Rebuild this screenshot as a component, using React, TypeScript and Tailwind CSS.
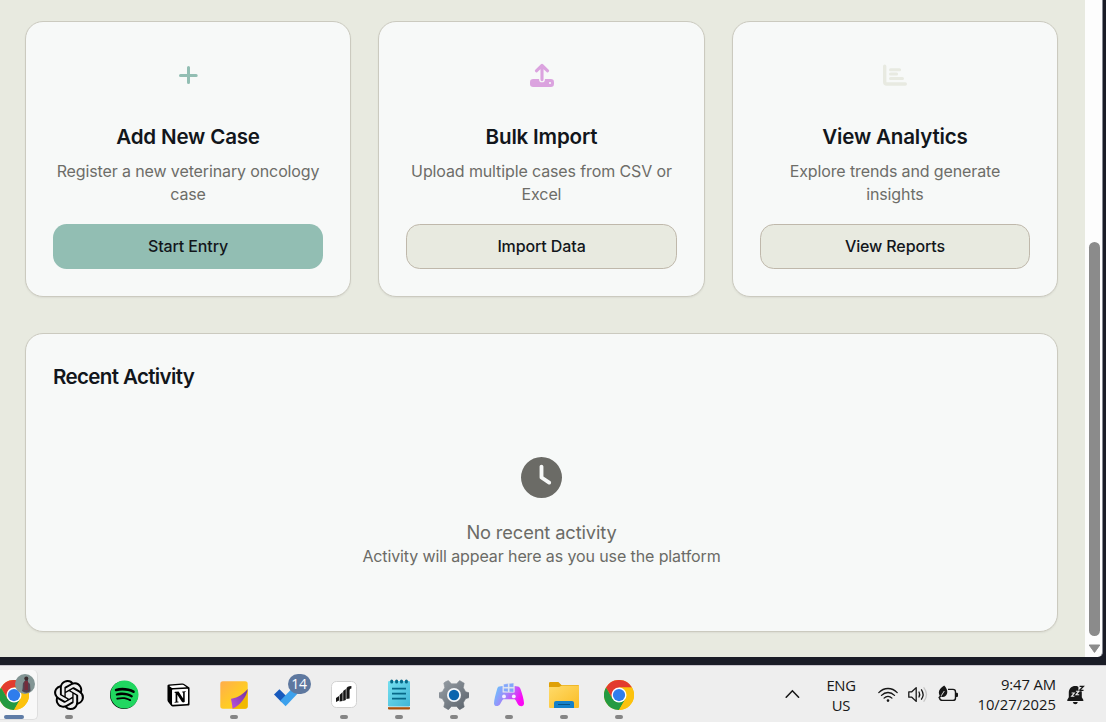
import type { ReactNode } from "react";
import { FaClock, FaSpotify } from "react-icons/fa6";
import { SiOpenai, SiNotion } from "react-icons/si";

function PlusIcon() {
  return (
    <svg className="mr-[1px]" width="20" height="20" viewBox="0 0 20 20" fill="none" stroke="#92beb3" strokeWidth="3" strokeLinecap="round">
      <path d="M10.5 2.5V17.5M2.500 10.5H18.2" />
    </svg>
  );
}

function UploadIcon() {
  return (
    <svg width="24" height="24" viewBox="0 0 24 24">
      <rect x="0" y="16" width="24" height="8" rx="3.2" fill="#dba3df" />
      <path d="M9.1 14.9V16.400a2.900 2.900 0 0 0 5.800 0v-1.500z" fill="#f7f9f8" />
      <circle cx="20" cy="20" r="1.1" fill="#f7f9f8" />
      <path d="M12 16.600V2.800M6.400 7.800 12 2.500l5.600 5.300" fill="none" stroke="#dba3df" strokeWidth="3.100" strokeLinecap="round" strokeLinejoin="round" />
    </svg>
  );
}

function BarsIcon() {
  return (
    <svg width="24" height="22" viewBox="0 0 24 22" fill="none" stroke="#e8eae1" strokeWidth="3" strokeLinecap="round">
      <path d="M1.700 2.300V18Q1.700 20 3.700 20H22.300" strokeWidth="3.400" />
      <path d="M7.500 5.800H16.600M7.500 10.100H13.600M7.500 14.500H19.500" />
    </svg>
  );
}

type CardProps = { icon: ReactNode; title: string; text: string; action: string; primary?: boolean };

function ActionCard({ icon, title, text, action, primary }: CardProps) {
  return (
    <section className="flex h-[276px] flex-col rounded-[18px] border border-[#cbcabf] bg-[#f7f9f8] px-[27px] pt-[26px] text-center shadow-[0_1px_2px_rgba(0,0,0,0.06)]">
      <div className="flex h-[54px] items-center justify-center pl-[1px]">{icon}</div>
      <h3 className="mt-[19px] text-[20.57px] leading-[31px] font-semibold tracking-[-0.18px] text-[#12161b]">{title}</h3>
      <p className="mt-[8px] h-[46px] text-[16px] leading-[23px] tracking-[-0.12px] text-[#6d6d68]">{text}</p>
      <button
        className={
          primary
            ? "mt-[18px] h-[45px] rounded-[13.7px] bg-[#92beb3] pb-[2px] text-[16px] font-medium tracking-[-0.12px] text-[#12161b]"
            : "mt-[18px] h-[45px] rounded-[13.7px] border border-[#bfb8ab] bg-[#e8eae0] pb-[2px] text-[16px] font-medium tracking-[-0.12px] text-[#12161b]"
        }
      >
        {action}
      </button>
    </section>
  );
}

function Chrome() {
  return (
    <svg width="30" height="30" viewBox="0 0 48 48">
      <circle cx="24" cy="24" r="24" fill="#fbbc05" />
      <path d="M24 12H44.8A24 24 0 0 0 3.2 12l10.4 18z" fill="#e33b2e" />
      <path d="M3.2 12A24 24 0 0 0 24 48L34.4 30 24 24 13.6 30z" fill="#249a41" />
      <path d="M24 12H44.8A24 24 0 0 1 24 48L34.4 30z" fill="#fcc20d" />
      <circle cx="24" cy="24" r="12" fill="#fff" />
      <circle cx="24" cy="24" r="9.8" fill="#2f7dec" />
    </svg>
  );
}

function StickyNotes() {
  return (
    <svg width="28" height="28" viewBox="0 0 28 28">
      <defs>
        <linearGradient id="note" x1="0" y1="0" x2="1" y2="1"><stop stopColor="#ffad4d" /><stop offset=".6" stopColor="#ffcd22" /></linearGradient>
        <linearGradient id="fold" x1="0" y1="1" x2="1" y2="0"><stop stopColor="#bb52df" /><stop offset="1" stopColor="#71329c" /></linearGradient>
      </defs>
      <rect x=".3" y=".3" width="27.4" height="27.4" rx="2.6" fill="url(#note)" />
      <path d="M12.5 27.7 27.7 9v16a2.7 2.7 0 0 1-2.7 2.7z" fill="#f1b900" />
      <path d="M12.5 27.7c-.3-5-1.4-8.3-1.5-10 3 .1 10.4-2.2 16.7-9.6-.6 7.2-7.4 16.4-15.2 19.6z" fill="url(#fold)" />
    </svg>
  );
}

function Todo() {
  return (
    <svg width="26" height="21" viewBox="0 0 26 21">
      <path d="M0 8.6 5.4 3.2l7.6 7.6-5.4 5.4z" fill="#185abd" />
      <path d="M6.2 14.8 20.5 0l5.3 5.3-14.2 15z" fill="#3ca1ed" />
    </svg>
  );
}

function TradeApp() {
  return (
    <svg width="26" height="27" viewBox="0 0 26 27">
      <rect x=".5" y=".5" width="25" height="26" rx="5" fill="#fff" stroke="#d2d2d2" />
      <path d="M5 21v-4l3-2v4.500zM8.600 20.500v-6.500l3-3v9zM12.200 20V10l2.600-2v11zM15.400 18V8c0-2 2-2.800 5-3v2.400c-1.600.2-1.800 1-1.800 3v7z" fill="#151515" />
    </svg>
  );
}

function Notepad() {
  return (
    <svg width="24" height="31" viewBox="0 0 24 31">
      <defs><linearGradient id="pad" x1="0" y1="0" x2="1" y2="1"><stop stopColor="#75e0f0" /><stop offset="1" stopColor="#40b5d6" /></linearGradient></defs>
      <path d="M1 26h22v3.5a1 1 0 0 1-1 1H2a1 1 0 0 1-1-1z" fill="#a9500c" />
      <path d="M1 26h22v2.2H1z" fill="#f4f4f4" />
      <rect x="1" y="2" width="22" height="25.4" rx="1.2" fill="url(#pad)" />
      <path d="M5 9.7h14M5 14.7h14M5 19.7h14" stroke="#076888" strokeWidth="1.8" />
      <path d="M4.7 1.9v1.2M9.6 1.9v1.2M14.5 1.9v1.2M19.4 1.9v1.2" stroke="#076888" strokeWidth="3" strokeLinecap="round" />
    </svg>
  );
}

function Gear() {
  return (
    <svg width="30" height="30" viewBox="0 0 30 30">
      <defs><linearGradient id="gear" x1="0" y1="0" x2="1" y2="1"><stop stopColor="#989fa6" /><stop offset="1" stopColor="#59616a" /></linearGradient></defs>
      <path d="M6.8 1.6 9.4.6l3 3.2h5.2l3-3.2 4.6 2.6-.9 4.5 2.3 4 3.4 1.1v4.8l-3.4 1.2-2.3 4 .9 4.1-4.6 2.8-3-3.3h-5.2l-3 3.3L4.8 27l.9-4.2-2.3-4L0 17.6v-4.8l3.4-1.1 2.3-4L4.8 3z" fill="url(#gear)" stroke="url(#gear)" strokeWidth=".6" strokeLinejoin="round" />
      <circle cx="15" cy="15" r="7" fill="#f5f7fa" />
      <circle cx="15" cy="15" r="5.2" fill="#0b64ae" />
    </svg>
  );
}

function GamePad() {
  return (
    <svg width="30" height="24" viewBox="0 0 30 24">
      <defs><linearGradient id="game" x1="0" y1="0" x2="1" y2=".35"><stop stopColor="#62cdfd" /><stop offset=".55" stopColor="#a87df9" /><stop offset="1" stopColor="#fb08f4" /></linearGradient></defs>
      <path d="M5.2 3.6 8.6 3v6.4h12V3l3.2.5c1.6.3 2.3 1.2 2.8 2.8 1.6 4.8 3.5 10.6 3.4 14.3 0 3.3-4.6 3.4-6.3.3l-1.9-3.5c-.5-.9-1-1.2-2-1.2H10.2c-1 0-1.5.4-2 1.2l-2 3.6c-1.7 3-6.2 2.7-6.2-.5 0-3.5 1.6-9 3-14 .5-1.8.8-2.6 2.2-2.9z" fill="url(#game)" />
      <path d="M9.6 1.2 14.2.6v3.7H9.6zM15.2.5l4.5-.5v4.3h-4.5zM9.6 5.2h4.6v3.7l-4.6-.5zM15.2 5.2h4.5v4.2l-4.5-.5z" fill="#82a6fb" stroke="#eee" strokeWidth=".4" />
      <circle cx="10" cy="13.4" r="1.9" fill="#f5f1ff" /><circle cx="19.8" cy="13.4" r="1.9" fill="#f5f1ff" />
    </svg>
  );
}

function Folder() {
  return (
    <svg width="30" height="28" viewBox="0 0 30 28">
      <defs><linearGradient id="folder" x1="0" y1="0" x2="1" y2="1"><stop stopColor="#ffdb6b" /><stop offset="1" stopColor="#fabd24" /></linearGradient></defs>
      <path d="M0 2.2Q0 1 1.2 1h8.2l3 3H29q1 0 1 1v4H0z" fill="#dfa007" />
      <path d="M0 6h10l3-1.4H30V26q0 1-1 1H1q-1 0-1-1z" fill="url(#folder)" />
      <path d="M5 27v-5q0-2 2-2h16q2 0 2 2v5z" fill="#1380ca" />
      <path d="M9 23.5h12" stroke="#075281" strokeWidth="1" />
    </svg>
  );
}

function TaskItem({ children, dot = true }: { children: ReactNode; dot?: boolean }) {
  return (
    <div className="relative flex h-[57px] w-[55px] shrink-0 items-center justify-center">
      {children}
      {dot && <span className="absolute bottom-[4px] left-[23.5px] h-[4px] w-[8px] rounded-full bg-[#858585]" />}
    </div>
  );
}

function Wifi() {
  return (
    <svg width="20" height="16" viewBox="0 0 20 16" fill="none" stroke="#171717" strokeWidth="1.3" strokeLinecap="round">
      <path d="M.8 5.6c5.2-5.5 13.2-5.5 18.4 0M3.5 8.4c3.8-3.9 9.2-3.9 13 0M6.1 11.1c2.3-2.4 5.5-2.4 7.8 0" />
      <circle cx="10" cy="13.6" r="1.3" fill="#171717" stroke="none" />
    </svg>
  );
}

function Speaker() {
  return (
    <svg width="20" height="17" viewBox="0 0 20 17" fill="none" stroke="#171717" strokeWidth="1.3" strokeLinecap="round" strokeLinejoin="round">
      <path d="M.8 5.8h3L8.2 1.6v13.8l-4.4-4.2h-3zM11 6q1.4 2.5 0 5M13.5 3.8q3.2 4.7 0 9.4" />
      <path d="M16 1.8q5 6.7 0 13.4" stroke="#c5c5c5" />
    </svg>
  );
}

function Battery() {
  return (
    <svg className="-mt-[2px]" width="21" height="18" viewBox="0 0 21 18">
      <path d="M10 4.400h5q2.500 0 2.500 2.500v6q0 2.500-2.500 2.500H4.500Q2 15.400 1.500 13" fill="none" stroke="#171717" strokeWidth="1.4" />
      <path d="M18 7.800h1q1 0 1 1V11q0 1-1 1h-1z" fill="#171717" />
      <path d="M6.2.4c3 3 4 6.8 2.2 9.6-1.3 2-3.6 2.4-5.1 1.4L1.2 13.6.2 12.7l1.500-2C-.2 7.3.9 3.4 6.2.4z" fill="#171717" />
      <path d="M3.2 10.8 6.3 6" stroke="#eee" strokeWidth=".9" />
    </svg>
  );
}

function BellSleep() {
  return (
    <svg width="18" height="20" viewBox="0 0 18 20">
      <path d="M1.8 7.6C1.8 3.7 4.6 1 8.3 1s6.5 2.7 6.5 6.6v4.6l1.6 2.7c.3.6 0 1.1-.7 1.1H.9c-.7 0-1-.5-.7-1.1l1.6-2.7z" fill="#171717" />
      <path d="M5.8 17h5q-.5 2.2-2.5 2.2T5.800 17z" fill="#171717" />
      <path d="M11.4 0H18v6.2h-6.6z" fill="#eee" />
      <path d="M12.6 1.3h3.8l-3.8 4h3.9" fill="none" stroke="#171717" strokeWidth="1.3" />
      <path d="M8.9 6.2h3L9 9.8h3.2M4.6 8h2.7l-2.7 3.3h2.8" fill="none" stroke="#eee" strokeWidth="1.1" />
    </svg>
  );
}

export default function App() {
  return (
    <div className="flex h-[722px] w-[1106px] flex-col overflow-hidden bg-[#1a1c26] font-['Inter',sans-serif]">
      <div className="flex h-[657px] shrink-0">
        <main className="w-[1085px] bg-[#e8eae0] pt-[21px] pr-[27px] pl-[25px]">
          <div className="grid grid-cols-3 gap-[27.4px]">
            <ActionCard icon={<PlusIcon />} title="Add New Case" text="Register a new veterinary oncology case" action="Start Entry" primary />
            <ActionCard icon={<UploadIcon />} title="Bulk Import" text="Upload multiple cases from CSV or Excel" action="Import Data" />
            <ActionCard icon={<BarsIcon />} title="View Analytics" text="Explore trends and generate insights" action="View Reports" />
          </div>
          <section className="mt-[36px] h-[299px] rounded-[18px] border border-[#cbcabf] bg-[#f7f9f8] px-[27px] pt-[27px] shadow-[0_1px_2px_rgba(0,0,0,0.06)]">
            <h3 className="text-[20.57px] leading-[31px] font-semibold tracking-[-0.65px] text-[#12161b]">Recent Activity</h3>
            <div className="flex flex-col items-center pt-[65px] text-[#6b6b66]">
              <FaClock className="h-[41px] w-[41px]" />
              <p className="mt-[21px] text-[18.3px] leading-[27px] tracking-[-0.13px]">No recent activity</p>
              <p className="-mt-[1px] text-[16px] leading-[22px] tracking-[-0.11px]">Activity will appear here as you use the platform</p>
            </div>
          </section>
        </main>
        <div className="flex w-[18px] flex-col items-center rounded-br-[5px] border-r border-[#858892] bg-[#fdfdfd] pt-[242px] pl-[1px]">
          <div className="h-[394px] w-[11px] rounded-full bg-[#8b8b8b]" />
          <svg className="mt-[8px]" width="13" height="10" viewBox="0 0 13 10">
            <path d="M1.2 1h10.6L6.5 8.4z" fill="#8b8b8b" stroke="#8b8b8b" strokeLinejoin="round" />
          </svg>
        </div>
      </div>

      <footer className="mt-[8px] flex h-[58px] shrink-0 border-t border-[#c8c4cc] bg-[#eeeeee] text-[#171717]">
        <div className="relative mt-[4px] mr-[3.5px] h-[50px] w-[38px] shrink-0 rounded-r-[5px] border-r border-b border-[#dedede] bg-[#f8f8f8]">
          <div className="-ml-[1px] pt-[10px]"><Chrome /></div>
          <svg className="absolute top-[4px] left-[15px]" width="20" height="20" viewBox="0 0 20 20">
            <circle cx="10" cy="10" r="10" fill="#829594" />
            <path d="M7 17c1-2 .5-5 1-8l2-2V4h3v4l2 2 .5 7q-4 3.500-8.500 0z" fill="#514452" />
            <path d="M9.500 7h3.500v9H9.500z" fill="#752c3b" /><circle cx="11.300" cy="4.500" r="2" fill="#3c2b2d" />
          </svg>
          <span className="absolute bottom-0 left-[4px] h-[4px] w-[20px] rounded-full bg-[#5f7ca6]" />
        </div>
        <TaskItem><SiOpenai className="h-[30px] w-[30px] text-black" /></TaskItem>
        <TaskItem dot={false}>
          <span className="flex h-[28px] w-[28px] items-center justify-center rounded-full bg-black">
            <FaSpotify className="h-[29px] w-[29px] shrink-0 text-[#20d760]" />
          </span>
        </TaskItem>
        <TaskItem dot={false}>
          <div className="relative mr-[1px] h-[24px] w-[23px]">
            <svg className="absolute inset-0" width="23" height="24" viewBox="0 0 23 24">
              <path d="M1 2 17 1l5 3.500V22L5.500 23 1 18z" fill="#fff" />
              <path d="M1 2.500 5 6v17L1 18z" fill="#000" />
            </svg>
            <SiNotion className="absolute inset-0 h-[24px] w-[23px] text-black" />
          </div>
        </TaskItem>
        <TaskItem><StickyNotes /></TaskItem>
        <TaskItem dot={false}>
          <div className="relative mr-[5px] pt-[4px]">
            <Todo />
            <span className="absolute -top-[8px] left-[14px] flex h-[20px] w-[23px] items-center justify-center rounded-full bg-[#5e789f] font-['Open_Sans',sans-serif] text-[14px] leading-none tracking-[-0.2px] text-white">14</span>
          </div>
        </TaskItem>
        <TaskItem><TradeApp /></TaskItem>
        <TaskItem><Notepad /></TaskItem>
        <TaskItem><Gear /></TaskItem>
        <TaskItem><GamePad /></TaskItem>
        <TaskItem><Folder /></TaskItem>
        <TaskItem><Chrome /></TaskItem>
        <div className="ml-auto flex h-[56px] items-center pr-[21px] font-['Open_Sans',sans-serif] text-[14.8px] leading-[20px]">
          <svg className="mr-[26px]" width="15" height="10" viewBox="0 0 15 10" fill="none" stroke="#171717" strokeWidth="1.6" strokeLinecap="round"><path d="m1.2 8.200 6.200-6.400 6.200 6.400" /></svg>
          <div className="w-[30px] pt-[1px] text-center tracking-[-0.3px]">ENG<br />US</div>
          <div className="ml-[22px] flex items-center gap-[10px] pt-[1px]"><Wifi /><Speaker /><Battery /></div>
          <div className="ml-[17px] w-[80px] text-right whitespace-nowrap"><span className="tracking-[-0.1px]">9:47 AM</span><br />10/27/2025</div>
          <div className="ml-[11px] pt-[2px]"><BellSleep /></div>
        </div>
      </footer>
    </div>
  );
}
